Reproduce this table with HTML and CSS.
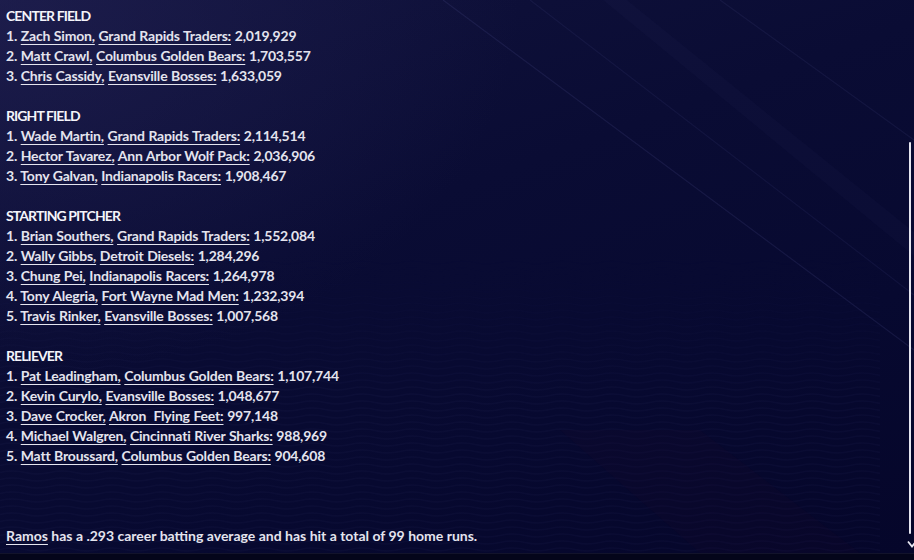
FILE: index.html
```html
<!DOCTYPE html>
<html lang="en">
<head>
<meta charset="utf-8">
<title>Awards</title>
<link rel="stylesheet" href="styles.css">
</head>
<body>
<div class="frame">
  <svg class="backdrop" width="914" height="553" viewBox="0 0 914 553" aria-hidden="true">
    <defs>
      <pattern id="waves" width="50" height="7" patternUnits="userSpaceOnUse">
        <path d="M0 3.5 Q12.5 0.5 25 3.5 T50 3.5" fill="none" stroke="rgba(110,110,190,0.045)" stroke-width="1.4"/>
      </pattern>
      <linearGradient id="waveFade" x1="0" y1="0" x2="0" y2="1">
        <stop offset="0" stop-color="#fff" stop-opacity="0"/>
        <stop offset="0.5" stop-color="#fff" stop-opacity="1"/>
        <stop offset="1" stop-color="#fff" stop-opacity="1"/>
      </linearGradient>
      <mask id="waveMask">
        <rect x="0" y="250" width="880" height="303" fill="url(#waveFade)"/>
      </mask>
    </defs>
    <rect x="0" y="250" width="880" height="303" fill="url(#waves)" mask="url(#waveMask)"/>
    <polygon points="603,0 627,0 914,232 914,256" fill="rgba(130,130,200,0.03)"/>
    <line x1="443" y1="0" x2="914" y2="350" stroke="rgba(140,140,220,0.11)" stroke-width="1.2"/>
    <line x1="530" y1="0" x2="914" y2="295" stroke="rgba(140,140,220,0.07)" stroke-width="1.2"/>
    <line x1="720" y1="0" x2="914" y2="140" stroke="rgba(140,140,220,0.08)" stroke-width="1.2"/>
    <polygon points="560,430 700,430 860,553 700,553" fill="rgba(40,10,40,0.1)"/>
  </svg>

  <main class="content">
    <section class="group">
      <h2 class="group-title">CENTER FIELD</h2>
      <p class="row">1. <a href="#">Zach Simon,</a> <a href="#">Grand Rapids Traders:</a> 2,019,929</p>
      <p class="row">2. <a href="#">Matt Crawl,</a> <a href="#">Columbus Golden Bears:</a> 1,703,557</p>
      <p class="row">3. <a href="#">Chris Cassidy,</a> <a href="#">Evansville Bosses:</a> 1,633,059</p>
    </section>

    <section class="group">
      <h2 class="group-title">RIGHT FIELD</h2>
      <p class="row">1. <a href="#">Wade Martin,</a> <a href="#">Grand Rapids Traders:</a> 2,114,514</p>
      <p class="row">2. <a href="#">Hector Tavarez,</a> <a href="#">Ann Arbor Wolf Pack:</a> 2,036,906</p>
      <p class="row">3. <a href="#">Tony Galvan,</a> <a href="#">Indianapolis Racers:</a> 1,908,467</p>
    </section>

    <section class="group">
      <h2 class="group-title">STARTING PITCHER</h2>
      <p class="row">1. <a href="#">Brian Southers,</a> <a href="#">Grand Rapids Traders:</a> 1,552,084</p>
      <p class="row">2. <a href="#">Wally Gibbs,</a> <a href="#">Detroit Diesels:</a> 1,284,296</p>
      <p class="row">3. <a href="#">Chung Pei,</a> <a href="#">Indianapolis Racers:</a> 1,264,978</p>
      <p class="row">4. <a href="#">Tony Alegria,</a> <a href="#">Fort Wayne Mad Men:</a> 1,232,394</p>
      <p class="row">5. <a href="#">Travis Rinker,</a> <a href="#">Evansville Bosses:</a> 1,007,568</p>
    </section>

    <section class="group">
      <h2 class="group-title">RELIEVER</h2>
      <p class="row">1. <a href="#">Pat Leadingham,</a> <a href="#">Columbus Golden Bears:</a> 1,107,744</p>
      <p class="row">2. <a href="#">Kevin Curylo,</a> <a href="#">Evansville Bosses:</a> 1,048,677</p>
      <p class="row">3. <a href="#">Dave Crocker,</a> <a href="#">Akron&nbsp; Flying Feet:</a> 997,148</p>
      <p class="row">4. <a href="#">Michael Walgren,</a> <a href="#">Cincinnati River Sharks:</a> 988,969</p>
      <p class="row">5. <a href="#">Matt Broussard,</a> <a href="#">Columbus Golden Bears:</a> 904,608</p>
    </section>

    <p class="summary"><a href="#">Ramos</a> has a .293 career batting average and has hit a total of 99 home runs.</p>
  </main>

  <div class="scrollbar" aria-hidden="true">
    <div class="scroll-thumb"></div>
    <svg class="scroll-arrow" width="10" height="8" viewBox="0 0 10 8"><path d="M1 1.5 L5 6.5 L9 1.5" fill="none" stroke="#e8e8f2" stroke-width="1.8"/></svg>
  </div>
</div>
<div class="bottom-bar"></div>
</body>
</html>
```

FILE: styles.css
```css
* { box-sizing: border-box; }

html, body {
  margin: 0;
  padding: 0;
  width: 914px;
  height: 560px;
  overflow: hidden;
  background: #05061f;
}

body {
  font-family: Lato, "Noto Sans", sans-serif;
  color: #e4e4ee;
  font-size: 14px;
  line-height: 20px;
}

.frame {
  position: relative;
  width: 914px;
  height: 553px;
  overflow: hidden;
  background:
    radial-gradient(ellipse 520px 380px at 0 0, rgba(40, 38, 90, 0.5), rgba(40, 38, 90, 0) 100%),
    linear-gradient(160deg, #11133d 0%, #0a0c34 40%, #070930 70%, #05062a 100%);
}

.backdrop {
  position: absolute;
  left: 0;
  top: 0;
  z-index: 0;
}

.content {
  position: relative;
  z-index: 1;
  padding: 6px 0 0 6px;
  display: flex;
  flex-direction: column;
  gap: 20px;
}

.group {
  display: flex;
  flex-direction: column;
}

.group-title {
  margin: 0;
  font-size: 14px;
  line-height: 20px;
  font-weight: 700;
  letter-spacing: -0.9px;
  color: #f4f4fa;
}

.row {
  margin: 0;
  font-weight: 700;
  letter-spacing: -0.2px;
  word-spacing: 0.5px;
  white-space: nowrap;
}

.row a,
.summary a {
  color: inherit;
  text-decoration: underline;
  text-decoration-thickness: 1px;
  text-underline-offset: 3px;
}

.summary {
  margin: 40px 0 0 0;
  font-weight: 700;
  letter-spacing: 0;
  white-space: nowrap;
}

.scrollbar {
  position: absolute;
  right: 0;
  top: 142px;
  width: 8px;
  height: 410px;
  z-index: 2;
}

.scroll-thumb {
  position: absolute;
  right: 3px;
  top: 0;
  width: 2px;
  height: 392px;
  background: #e6e6f0;
  border-radius: 1px;
}

.scroll-arrow {
  position: absolute;
  right: -3px;
  top: 398px;
}

.bottom-bar {
  height: 7px;
  background: #04051a;
  border-top: 1px solid rgba(120, 120, 170, 0.12);
}
```
